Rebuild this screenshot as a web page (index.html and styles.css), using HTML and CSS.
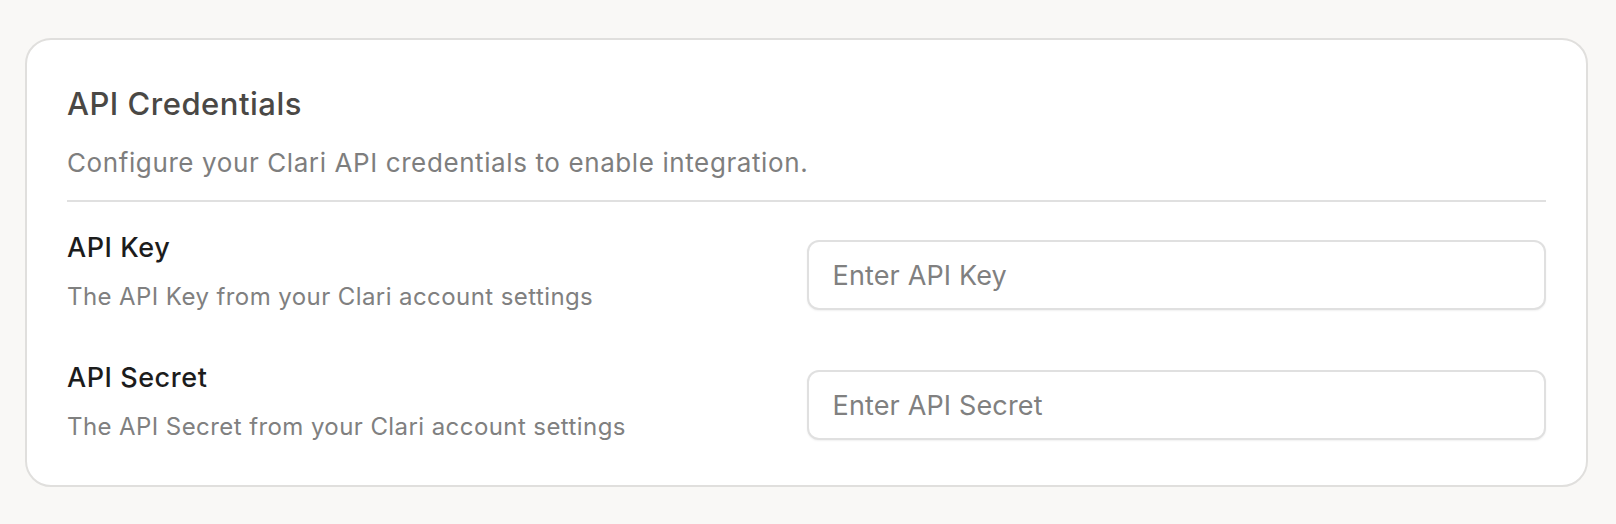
FILE: index.html
```html
<!DOCTYPE html>
<html lang="en">
<head>
<meta charset="utf-8">
<title>API Credentials</title>
<link rel="stylesheet" href="styles.css">
</head>
<body>
  <section class="card">
    <header class="card-head">
      <h2 class="card-title">API Credentials</h2>
      <p class="card-desc">Configure your Clari API credentials to enable integration.</p>
    </header>
    <div class="fields">
      <div class="field">
        <div class="field-text">
          <label class="field-label" for="api-key">API Key</label>
          <p class="field-hint">The API Key from your Clari account settings</p>
        </div>
        <input class="field-input" id="api-key" type="text" placeholder="Enter API Key">
      </div>
      <div class="field">
        <div class="field-text">
          <label class="field-label" for="api-secret">API Secret</label>
          <p class="field-hint">The API Secret from your Clari account settings</p>
        </div>
        <input class="field-input" id="api-secret" type="password" placeholder="Enter API Secret">
      </div>
    </div>
  </section>
</body>
</html>
```
FILE: styles.css
```css
* { box-sizing: border-box; }

html, body {
  margin: 0;
  padding: 0;
  background: #f9f8f6;
  font-family: Inter, "Noto Sans", "Liberation Sans", sans-serif;
}

body {
  padding: 38px 28px 36px 25px;
}

.card {
  background: #ffffff;
  border: 2px solid #e0dfdd;
  border-radius: 26px;
  padding: 46px 40px 42px 40px;
}

.card-head {
  border-bottom: 2px solid #e0e0e0;
  padding-bottom: 21px;
}

.card-title {
  margin: 0;
  font-size: 31px;
  line-height: 36px;
  font-weight: 500;
  letter-spacing: 0.5px;
  color: #4a4845;
}

.card-desc {
  margin: 25px 0 0 0;
  font-size: 26px;
  line-height: 32px;
  font-weight: 400;
  letter-spacing: 0.6px;
  color: #7e7e7e;
}

.fields {
  display: flex;
  flex-direction: column;
  gap: 47px;
  padding-top: 28px;
}

.field {
  display: grid;
  grid-template-columns: 1fr 1fr;
  align-items: start;
}

.field-text {
  display: flex;
  flex-direction: column;
  gap: 15px;
}

.field-label {
  font-size: 27px;
  line-height: 36px;
  font-weight: 500;
  letter-spacing: 0.55px;
  color: #1c1c1c;
}

.field-hint {
  margin: 0;
  font-size: 24px;
  line-height: 32px;
  letter-spacing: 0.42px;
  color: #808080;
}

.field-input {
  margin-top: 10px;
  height: 70px;
  width: 100%;
  border: 2px solid #e0e0e0;
  border-radius: 12px;
  padding: 0 24px;
  font-family: inherit;
  font-size: 27px;
  letter-spacing: 0.15px;
  color: #1c1c1c;
  background: #ffffff;
  box-shadow: 0 1px 2px rgba(0, 0, 0, 0.06);
  outline: none;
}

.field-input::placeholder {
  color: #808080;
  opacity: 1;
}
```
